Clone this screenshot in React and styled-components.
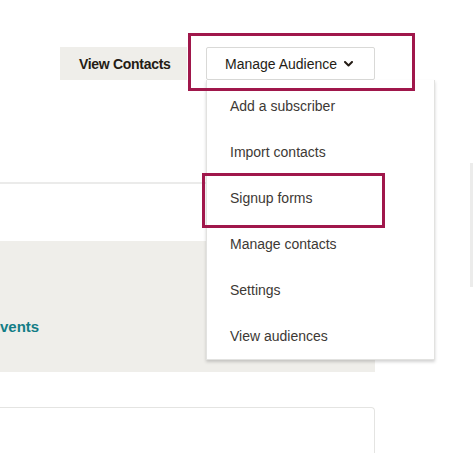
import styled, { createGlobalStyle } from "styled-components";

const GlobalStyle = createGlobalStyle`
  html, body {
    margin: 0;
    padding: 0;
    background: #ffffff;
    font-family: "Liberation Sans", Arial, sans-serif;
    overflow: hidden;
  }
`;

const menuItems = [
  "Add a subscriber",
  "Import contacts",
  "Signup forms",
  "Manage contacts",
  "Settings",
  "View audiences",
];

const Chevron = () => (
  <svg width="9" height="6" viewBox="0 0 9 6">
    <polyline
      points="1,1 4.5,4.5 8,1"
      fill="none"
      stroke="#241c15"
      strokeWidth="2"
      strokeLinecap="round"
      strokeLinejoin="round"
    />
  </svg>
);

const App = () => {
  return (
    <Page>
      <GlobalStyle />
      <MainColumn>
        <Toolbar>
          <ViewButton>View Contacts</ViewButton>
          <DropdownWrap>
            <ManageButton>
              Manage Audience
              <Chevron />
            </ManageButton>
            <Highlight $left={-18} $top={-14} $width={227} $height={58} />
            <Menu>
              {menuItems.map((item) => (
                <MenuItem key={item}>
                  {item}
                  {item === "Signup forms" && (
                    <Highlight $left={-5} $top={-2} $width={183} $height={55} />
                  )}
                </MenuItem>
              ))}
            </Menu>
          </DropdownWrap>
        </Toolbar>
        <TopCard />
        <GrayPanel>
          <TealLink>vents</TealLink>
        </GrayPanel>
        <BottomCard />
      </MainColumn>
      <SideCard />
    </Page>
  );
};

const Page = styled.div`
  display: flex;
  width: 474px;
  height: 453px;
  overflow: hidden;
`;

const MainColumn = styled.div`
  width: 375px;
  flex-shrink: 0;
  display: flex;
  flex-direction: column;
`;

const Toolbar = styled.div`
  display: flex;
  justify-content: flex-end;
  align-items: center;
  gap: 19px;
  padding-top: 47px;
  height: 33px;
`;

const ViewButton = styled.div`
  height: 33px;
  width: 127px;
  box-sizing: border-box;
  display: flex;
  align-items: center;
  padding-left: 19px;
  background: #efeeea;
  color: #241c15;
  font-size: 14px;
  font-weight: bold;
  letter-spacing: -0.3px;
`;

const DropdownWrap = styled.div`
  position: relative;
`;

const ManageButton = styled.div`
  height: 33px;
  width: 169px;
  box-sizing: border-box;
  display: flex;
  align-items: center;
  gap: 7px;
  padding-left: 18px;
  border: 1px solid #d9d9d7;
  border-radius: 2px;
  background: #ffffff;
  color: #241c15;
  font-size: 14px;

  svg {
    margin-top: 1px;
  }
`;

const Highlight = styled.div`
  position: absolute;
  left: ${(p) => p.$left}px;
  top: ${(p) => p.$top}px;
  width: ${(p) => p.$width}px;
  height: ${(p) => p.$height}px;
  box-sizing: border-box;
  border: 3px solid #a0174b;
  z-index: 3;
  pointer-events: none;
`;

const Menu = styled.div`
  position: absolute;
  top: 33px;
  left: 0;
  width: 229px;
  box-sizing: border-box;
  padding: 3px 0 0;
  background: #ffffff;
  border: 1px solid #e2e2e0;
  border-top: none;
  box-shadow: 0 2px 3px rgba(0, 0, 0, 0.18);
  z-index: 2;
`;

const MenuItem = styled.div`
  position: relative;
  height: 46px;
  display: flex;
  align-items: center;
  padding-left: 23px;
  color: #3d3935;
  font-size: 14px;
`;

const TopCard = styled.div`
  margin-top: 102px;
  height: 57px;
  border-top: 2px solid #ebebea;
  background: #ffffff;
`;

const GrayPanel = styled.div`
  height: 131px;
  background: #efeeea;
  display: flex;
  align-items: flex-end;
  padding-bottom: 37px;
  box-sizing: border-box;
`;

const TealLink = styled.span`
  color: #137d86;
  font-size: 15px;
  font-weight: bold;
`;

const BottomCard = styled.div`
  margin-top: 35px;
  flex: 1;
  border: 1px solid #e4e4e2;
  border-left: none;
  border-bottom: none;
  border-top-right-radius: 4px;
`;

const SideCard = styled.div`
  flex-shrink: 0;
  margin-left: 95px;
  margin-top: 163px;
  height: 124px;
  width: 0;
  border-left: 3px solid #ececeb;
`;

export default App;
